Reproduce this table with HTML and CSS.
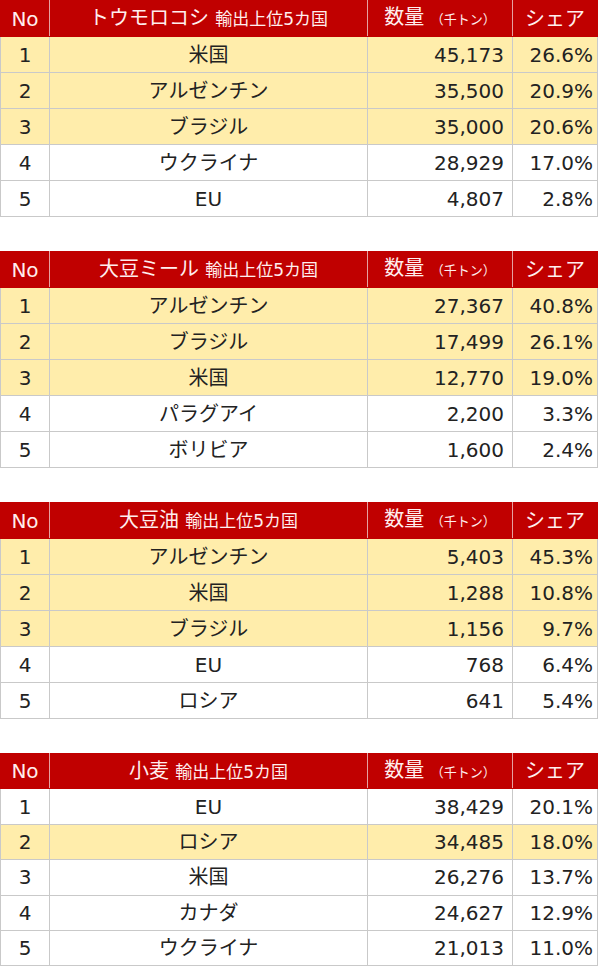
FILE: index.html
```html
<!DOCTYPE html>
<html lang="ja">
<head>
<meta charset="utf-8">
<link rel="stylesheet" href="styles.css">
</head>
<body>
<div class="stack">
  <table class="rank">
    <colgroup><col class="c1"><col class="c2"><col class="c3"><col class="c4"></colgroup>
    <thead><tr><th>No</th><th>トウモロコシ <span class="sub">輸出上位5カ国</span></th><th>数量 <span class="unit">（千トン）</span></th><th>シェア</th></tr></thead>
    <tbody>
      <tr class="hl"><td>1</td><td>米国</td><td class="num">45,173</td><td class="pct">26.6%</td></tr>
      <tr class="hl"><td>2</td><td>アルゼンチン</td><td class="num">35,500</td><td class="pct">20.9%</td></tr>
      <tr class="hl"><td>3</td><td>ブラジル</td><td class="num">35,000</td><td class="pct">20.6%</td></tr>
      <tr><td>4</td><td>ウクライナ</td><td class="num">28,929</td><td class="pct">17.0%</td></tr>
      <tr><td>5</td><td>EU</td><td class="num">4,807</td><td class="pct">2.8%</td></tr>
    </tbody>
  </table>
  <table class="rank">
    <colgroup><col class="c1"><col class="c2"><col class="c3"><col class="c4"></colgroup>
    <thead><tr><th>No</th><th>大豆ミール <span class="sub">輸出上位5カ国</span></th><th>数量 <span class="unit">（千トン）</span></th><th>シェア</th></tr></thead>
    <tbody>
      <tr class="hl"><td>1</td><td>アルゼンチン</td><td class="num">27,367</td><td class="pct">40.8%</td></tr>
      <tr class="hl"><td>2</td><td>ブラジル</td><td class="num">17,499</td><td class="pct">26.1%</td></tr>
      <tr class="hl"><td>3</td><td>米国</td><td class="num">12,770</td><td class="pct">19.0%</td></tr>
      <tr><td>4</td><td>パラグアイ</td><td class="num">2,200</td><td class="pct">3.3%</td></tr>
      <tr><td>5</td><td>ボリビア</td><td class="num">1,600</td><td class="pct">2.4%</td></tr>
    </tbody>
  </table>
  <table class="rank">
    <colgroup><col class="c1"><col class="c2"><col class="c3"><col class="c4"></colgroup>
    <thead><tr><th>No</th><th>大豆油 <span class="sub">輸出上位5カ国</span></th><th>数量 <span class="unit">（千トン）</span></th><th>シェア</th></tr></thead>
    <tbody>
      <tr class="hl"><td>1</td><td>アルゼンチン</td><td class="num">5,403</td><td class="pct">45.3%</td></tr>
      <tr class="hl"><td>2</td><td>米国</td><td class="num">1,288</td><td class="pct">10.8%</td></tr>
      <tr class="hl"><td>3</td><td>ブラジル</td><td class="num">1,156</td><td class="pct">9.7%</td></tr>
      <tr><td>4</td><td>EU</td><td class="num">768</td><td class="pct">6.4%</td></tr>
      <tr><td>5</td><td>ロシア</td><td class="num">641</td><td class="pct">5.4%</td></tr>
    </tbody>
  </table>
  <table class="rank last">
    <colgroup><col class="c1"><col class="c2"><col class="c3"><col class="c4"></colgroup>
    <thead><tr><th>No</th><th>小麦 <span class="sub">輸出上位5カ国</span></th><th>数量 <span class="unit">（千トン）</span></th><th>シェア</th></tr></thead>
    <tbody>
      <tr><td>1</td><td>EU</td><td class="num">38,429</td><td class="pct">20.1%</td></tr>
      <tr class="hl"><td>2</td><td>ロシア</td><td class="num">34,485</td><td class="pct">18.0%</td></tr>
      <tr><td>3</td><td>米国</td><td class="num">26,276</td><td class="pct">13.7%</td></tr>
      <tr><td>4</td><td>カナダ</td><td class="num">24,627</td><td class="pct">12.9%</td></tr>
      <tr><td>5</td><td>ウクライナ</td><td class="num">21,013</td><td class="pct">11.0%</td></tr>
    </tbody>
  </table>
</div>
</body>
</html>
```
FILE: styles.css
```css
html, body {
  margin: 0;
  padding: 0;
  background: #ffffff;
}
body {
  font-family: "DejaVu Sans", "Noto Sans CJK JP", sans-serif;
  color: #222222;
}
.stack {
  display: flex;
  flex-direction: column;
  gap: 34px;
}
.rank {
  width: 597px;
  border-collapse: collapse;
  table-layout: fixed;
}
.c1 { width: 49px; }
.c2 { width: 318px; }
.c3 { width: 145px; }
.c4 { width: 85px; }
.rank tr {
  height: 36px;
}
.rank.last tr {
  height: 35.4px;
}
.rank th {
  background: #c00000;
  color: #ffeeee;
  font-weight: normal;
  font-size: 20px;
  line-height: 24px;
  padding: 0;
  border: 1px solid #e6a0a0;
  border-top-color: #c00000;
  border-bottom-color: #c00000;
  text-align: center;
  white-space: nowrap;
}
.rank th:first-child { border-left-color: #c00000; }
.rank th:last-child { border-right-color: #c00000; }
.rank .sub {
  font-size: 17px;
}
.rank .unit {
  font-size: 13px;
}
.rank td {
  font-size: 20px;
  line-height: 24px;
  padding: 0;
  border: 1px solid #c9c9c9;
  text-align: center;
  white-space: nowrap;
}
.rank tr.hl td {
  background: #ffedab;
}
.rank td.num {
  text-align: right;
  padding-right: 8px;
}
.rank td.pct {
  text-align: right;
  padding-right: 4px;
}
```
